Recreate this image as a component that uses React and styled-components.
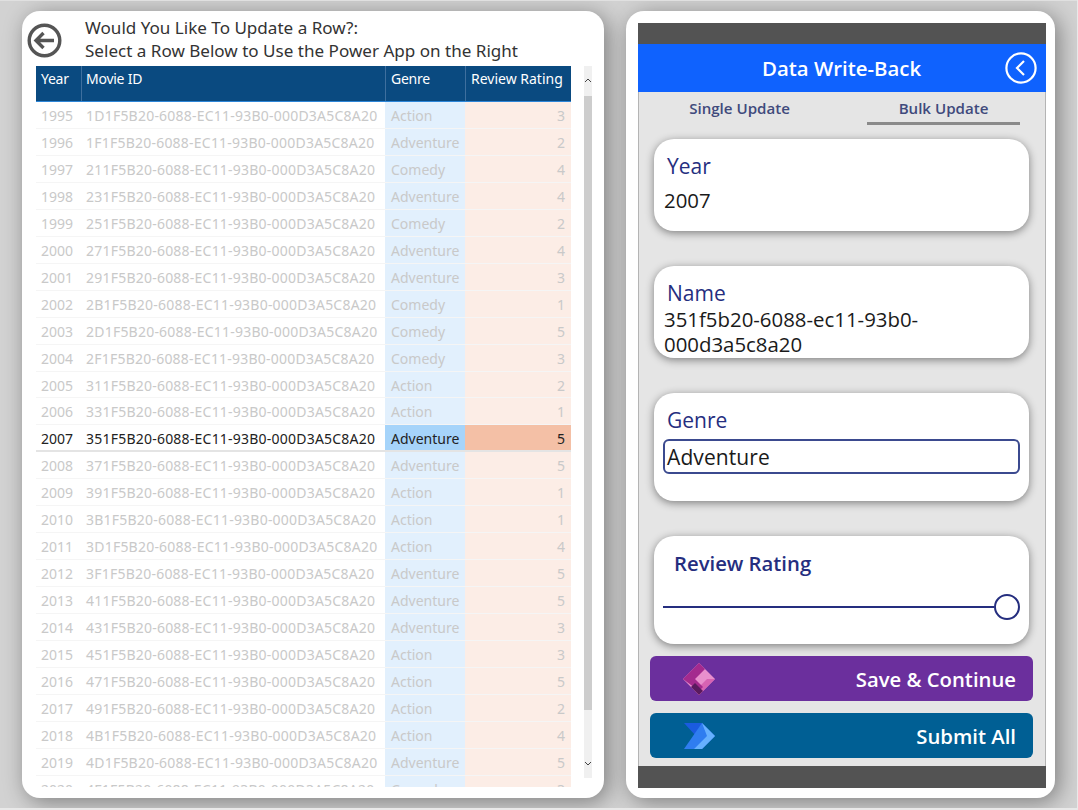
import React from "react";
import styled, { createGlobalStyle } from "styled-components";

const Global = createGlobalStyle`
  html, body { margin: 0; padding: 0; background: #e9e9e9; }
  * { box-sizing: border-box; }
`;

const Page = styled.div`
  width: 1077px; height: 808px; display: flex; gap: 22px;
  padding: 10px 22px 10px 22px; border-top: 1px solid #e0e0e0;
  background: #d2d2d2; overflow: hidden;
  font-family: "Open Sans", "Noto Sans", sans-serif;
`;
const Card = styled.section`
  background: #fff; border-radius: 18px;
  box-shadow: 4px 4px 22px rgba(0,0,0,.4);
  flex: none; height: 787px;
`;
const TableCard = styled(Card)`
  width: 582px; padding: 0 12px 11px 14px; display: flex; flex-direction: column;
`;
const TitleRow = styled.header`
  height: 55px; flex: none; display: flex; align-items: flex-start;
`;
const BackIcon = styled.svg`
  width: 35px; height: 35px; margin: 12px 0 0 -9px; flex: none;
`;
const Title = styled.h1`
  margin: 5px 0 0 23px; font-weight: 400; font-size: 17.07px; line-height: 23px; color: #333;
  font-family: "Noto Sans", sans-serif;
  white-space: nowrap;
`;
const TableArea = styled.div`
  flex: 1; min-height: 0; display: flex; gap: 13px;
`;
const Table = styled.div`
  width: 535px; height: 721px; overflow: hidden; flex: none;
  font-family: "Noto Sans", sans-serif;
`;
const HeadRow = styled.div`
  display: grid; grid-template-columns: 45px 304px 80px 106px; height: 36px;
  background: #0a4a80; border-bottom: 1px solid #2d86d8; color: #fff; font-size: 14px;
`;
const HeadCell = styled.div`
  padding: 3px 0 0 ${p => p.$pad || 4}px; white-space: nowrap; overflow: hidden;
  border-left: 1px solid #3e6f9e;
  letter-spacing: ${p => p.$ls || "-.25px"};
  &:first-child { border-left: 0; padding-left: 5px; }
`;
const Row = styled.div`
  display: grid; grid-template-columns: 45px 304px 80px 106px; height: 26.96px;
  font-size: 14px; line-height: 28px;
  color: ${p => (p.$selected ? "#222" : "#c9c9c9")};
  border-bottom: ${p => (p.$selected ? "2px solid #e4e4e4" : "1px solid #f5f5f5")};
`;
const Cell = styled.div`
  padding-left: 5px; white-space: nowrap; overflow: hidden;
`;
const IdCell = styled(Cell)`
  letter-spacing: .22px;
`;
const GenreCell = styled(Cell)`
  padding-left: 6px;
  background: ${p => (p.$selected ? "#a6d4fa" : "#e2f0fd")};
`;
const RatingCell = styled(Cell)`
  background: ${p => (p.$selected ? "#f4c0a6" : "#fcede6")};
  text-align: right; padding: 0 6px 0 0;
`;
const Scrollbar = styled.div`
  width: 8px; height: 712px; flex: none; background: #f0f0f0;
  display: flex; flex-direction: column; align-items: center;
`;
const ScrollArrow = styled.svg`
  width: 8px; height: 30px; flex: none;
`;
const ScrollThumb = styled.div`
  width: 8px; flex: none; height: 614px; background: #cdcdcd;
`;
const ScrollSpacer = styled.div`
  flex: 1;
`;

const AppCard = styled(Card)`
  width: 429px; padding: 12px 9px 10px 12px;
`;
const Phone = styled.div`
  height: 765px; display: flex; flex-direction: column; background: #e5e5e5;
  border-left: 1px solid #b4b4b4; border-right: 1px solid #b4b4b4;
`;
const DarkBar = styled.div`
  height: ${p => p.$h}px; background: #535353; flex: none; margin: 0 -1px;
`;
const AppHeader = styled.div`
  height: 48px; flex: none; background: #0f62fe; color: #fff; margin: 0 -1px;
  display: flex; align-items: center; justify-content: space-between; padding: 0 9px 0 124px;
  font-size: 20.4px; font-weight: 600;
`;
const CircleBack = styled.svg`
  width: 32px; height: 32px;
`;
const Tabs = styled.div`
  height: 33px; flex: none; display: grid; grid-template-columns: 201px 153px; column-gap: 27px;
`;
const Tab = styled.div`
  font-size: 15.1px; font-weight: 600; color: #3f4a7c; text-align: center; line-height: 33px; height: 33px;
  border-bottom: ${p => (p.$active ? "3px solid #8a8a8a" : "0")};
`;
const Section = styled.div`
  flex: 1; display: flex; flex-direction: column; padding: 14px 16px 0 15px; gap: 35px;
`;
const FieldCard = styled.div`
  height: ${p => p.$h}px; flex: none; background: #fff; border-radius: 20px; overflow: hidden;
  box-shadow: 0 2px 8px rgba(0,0,0,.45);
  padding: 14px 9px 0 10px;
`;
const Label = styled.div`
  font-size: ${p => p.$size || 21}px; line-height: 27px; color: #252e7f; padding-left: ${p => p.$indent || 3}px;
  font-weight: ${p => p.$w || 500};
`;
const Value = styled.div`
  font-size: 20.4px; line-height: 25px; color: #1a1a1a; margin-top: ${p => p.$mt || 0}px; font-weight: 500;
`;
const GenreInput = styled.div`
  height: 35px; margin: 5px 0 0 -1px; border: 2px solid #3b4a8f; border-radius: 6px;
  font-size: 21px; line-height: 33px; padding-left: 2px; color: #1a1a1a; letter-spacing: .1px; font-weight: 500;
`;
const SliderRow = styled.div`
  display: flex; align-items: center; margin: 17px 0 0 -1px;
`;
const SliderTrack = styled.div`
  flex: 1; height: 2px; background: #252e7f;
`;
const SliderThumb = styled.div`
  width: 26px; height: 26px; border-radius: 50%; border: 2px solid #252e7f; background: #fff; flex: none;
`;
const Actions = styled.div`
  display: flex; flex-direction: column; gap: 12px; padding: 12px 12px 8px 11px; flex: none;
`;
const ActionBtn = styled.div`
  height: 45px; border-radius: 6px; background: ${p => p.$bg}; color: #fff;
  display: flex; align-items: center; justify-content: space-between; padding: 0 17px 0 33px;
  font-size: 20.3px; font-weight: 600;
`;
const Logo = styled.svg`
  width: 32px; height: 32px; flex: none;
`;

const data = [
  [1995,"1D1F5B20","Action",3],[1996,"1F1F5B20","Adventure",2],[1997,"211F5B20","Comedy",4],
  [1998,"231F5B20","Adventure",4],[1999,"251F5B20","Comedy",2],[2000,"271F5B20","Adventure",4],
  [2001,"291F5B20","Adventure",3],[2002,"2B1F5B20","Comedy",1],[2003,"2D1F5B20","Comedy",5],
  [2004,"2F1F5B20","Comedy",3],[2005,"311F5B20","Action",2],[2006,"331F5B20","Action",1],
  [2007,"351F5B20","Adventure",5],[2008,"371F5B20","Adventure",5],[2009,"391F5B20","Action",1],
  [2010,"3B1F5B20","Action",1],[2011,"3D1F5B20","Action",4],[2012,"3F1F5B20","Adventure",5],
  [2013,"411F5B20","Adventure",5],[2014,"431F5B20","Adventure",3],[2015,"451F5B20","Action",3],
  [2016,"471F5B20","Action",5],[2017,"491F5B20","Action",2],[2018,"4B1F5B20","Action",4],
  [2019,"4D1F5B20","Adventure",5],[2020,"4F1F5B20","Comedy",3],
];

export default function App() {
  return (
    <>
      <Global />
      <Page>
        <TableCard>
          <TitleRow>
            <BackIcon viewBox="0 0 35 35" fill="none" stroke="#555">
              <circle cx="17.5" cy="17.5" r="15.3" strokeWidth="3.4" />
              <path d="M27 17.500H9M16.500 10 9 17.500 16.500 25" strokeWidth="3.400" />
            </BackIcon>
            <Title>Would You Like To Update a Row?:<br />Select a Row Below to Use the Power App on the Right</Title>
          </TitleRow>
          <TableArea>
            <Table>
              <HeadRow>
                <HeadCell>Year</HeadCell>
                <HeadCell>Movie ID</HeadCell>
                <HeadCell $pad={5}>Genre</HeadCell>
                <HeadCell $pad={5} $ls="0">Review Rating</HeadCell>
              </HeadRow>
              {data.map(([y, id, g, r]) => {
                const sel = y === 2007;
                return (
                  <Row key={y} $selected={sel}>
                    <Cell>{y}</Cell>
                    <IdCell>{id}-6088-EC11-93B0-000D3A5C8A20</IdCell>
                    <GenreCell $selected={sel}>{g}</GenreCell>
                    <RatingCell $selected={sel}>{r}</RatingCell>
                  </Row>
                );
              })}
            </Table>
            <Scrollbar>
              <ScrollArrow viewBox="0 0 8 30" fill="none" stroke="#444" strokeWidth="1">
                <path d="M1 16 4 13 7 16" />
              </ScrollArrow>
              <ScrollThumb />
              <ScrollSpacer />
              <ScrollArrow viewBox="0 0 8 30" fill="none" stroke="#444" strokeWidth="1">
                <path d="M1 14 4 17 7 14" />
              </ScrollArrow>
            </Scrollbar>
          </TableArea>
        </TableCard>
        <AppCard>
          <Phone>
            <DarkBar $h={21} />
            <AppHeader>
              <span>Data Write-Back</span>
              <CircleBack viewBox="0 0 32 32" fill="none" stroke="#fff" strokeWidth="2.2">
                <circle cx="16" cy="16" r="14.6" />
                <path d="M19 9 12 16l7 7" />
              </CircleBack>
            </AppHeader>
            <Tabs>
              <Tab>Single Update</Tab>
              <Tab $active>Bulk Update</Tab>
            </Tabs>
            <Section>
              <FieldCard $h={92}>
                <Label>Year</Label>
                <Value $mt={8}>2007</Value>
              </FieldCard>
              <FieldCard $h={92}>
                <Label>Name</Label>
                <Value>351f5b20-6088-ec11-93b0-<br />000d3a5c8a20</Value>
              </FieldCard>
              <FieldCard $h={108}>
                <Label>Genre</Label>
                <GenreInput>Adventure</GenreInput>
              </FieldCard>
              <FieldCard $h={108}>
                <Label $indent={10} $size={20.3} $w={600}>Review Rating</Label>
                <SliderRow>
                  <SliderTrack />
                  <SliderThumb />
                </SliderRow>
              </FieldCard>
            </Section>
            <Actions>
              <ActionBtn $bg="#6b2f9d">
                <Logo viewBox="0 0 32 32">
                  <polygon points="16,0 32,16 16,32 0,16" fill="#e88fcd" />
                  <polygon points="24,16 32,16 16,32 12,28" fill="#d763b3" />
                  <polygon points="0,16 16,0 22,6 12,16 20,24 16,28" fill="#a42a8e" />
                  <polygon points="8,24 12,20 20,28 16,32" fill="#5a1a5e" />
                </Logo>
                <span>Save &amp; Continue</span>
              </ActionBtn>
              <ActionBtn $bg="#005f94">
                <Logo viewBox="0 0 32 32">
                  <polygon points="1,3 19,3 25,16 13,16" fill="#1a5be0" />
                  <polygon points="1,29 19,3 32,16 19,29" fill="#2f7df0" />
                  <polygon points="11,29 24,16 19,3 32,16 19,29" fill="#66b0ff" />
                </Logo>
                <span>Submit All</span>
              </ActionBtn>
            </Actions>
            <DarkBar $h={22} />
          </Phone>
        </AppCard>
      </Page>
    </>
  );
}
